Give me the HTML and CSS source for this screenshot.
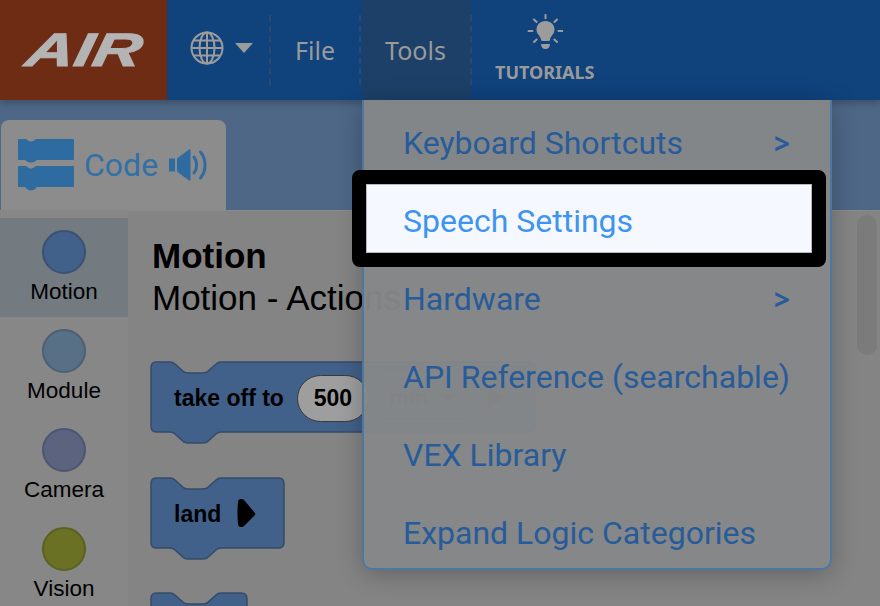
FILE: index.html
```html
<!DOCTYPE html>
<html lang="en">
<head>
<meta charset="utf-8">
<title>VEX AIR</title>
<link rel="stylesheet" href="styles.css">
</head>
<body>
<div class="app">
  <header class="topbar">
    <div class="logo"><span class="logo-text">AIR</span></div>
    <div class="lang">
      <svg class="globe" viewBox="0 0 34 34" width="34" height="34" fill="none" stroke="#9c9c9c" stroke-width="2">
        <circle cx="17" cy="17" r="15.5"/>
        <ellipse cx="17" cy="17" rx="7.5" ry="15.5"/>
        <path d="M17 1.5v31M1.5 17h31M3.6 9.5h26.8M3.6 24.5h26.8"/>
      </svg>
      <span class="caret"></span>
    </div>
    <div class="nav-item">File</div>
    <div class="nav-item nav-active">Tools</div>
    <div class="tutorials">
      <svg viewBox="0 0 36 36" width="36" height="36" fill="#9c9c9c" stroke="none">
        <path d="M18.500 7c-5.300 0-9 3.700-9 8.600 0 3 1.500 4.700 2.800 6.300.9 1.100 1.500 2.300 1.700 3.900 0 .7.500 1.200 1.200 1.200h6.600c.7 0 1.200-.5 1.200-1.200.2-1.600.8-2.800 1.700-3.900 1.300-1.600 2.800-3.300 2.800-6.300 0-4.900-3.700-8.600-9-8.600z"/>
        <path d="M14 30h9c0 3-1.800 5-4.500 5S14 33 14 30z"/>
        <path d="M18.500 .8v3.400M7 5.500l2.600 2.500M30 5.500l-2.600 2.500M1.500 17h4M31.500 17h4M7 28l2.600-2.500M30 28l-2.600-2.500" stroke="#9c9c9c" stroke-width="2" stroke-linecap="round"/>
      </svg>
      <span class="tutorials-label">TUTORIALS</span>
    </div>
  </header>

  <div class="tabbar">
    <div class="tab">
      <svg class="code-icon" viewBox="0 0 56 52" width="56" height="52" fill="#2e6ba1">
        <path d="M1 0h6.500c1.500 0 2.500 2.500 5.500 2.500s4-2.500 5.500-2.500H55a1 1 0 0 1 1 1v19a1 1 0 0 1-1 1H19.500c-1.500 0-2.500 2.500-6.500 2.500S8 21 6.500 21H1a1 1 0 0 1-1-1V1a1 1 0 0 1 1-1z"/>
        <path d="M1 27h6.500c1.500 0 2.500 2.500 5.500 2.500s4-2.500 5.500-2.500H55a1 1 0 0 1 1 1v19a1 1 0 0 1-1 1H19.500c-1.500 0-2.500 3.500-6.500 3.500S8 48 6.500 48H1a1 1 0 0 1-1-1V28a1 1 0 0 1 1-1z"/>
      </svg>
      <span class="tab-label">Code</span>
      <svg class="speaker" viewBox="0 0 38 32" width="38" height="32" fill="#2e6ba1">
        <path d="M0 9.500h6v13H0z"/>
        <path d="M8 9.500 20 .5c.8-.5 1.500 0 1.500 1v29c0 1-.7 1.500-1.500 1L8 22.500z"/>
        <path d="M25 8c3.500 4.500 3.500 11.500 0 16M31.500 3c6 7 6 19 0 26" fill="none" stroke="#2e6ba1" stroke-width="3" stroke-linecap="round"/>
      </svg>
    </div>
  </div>

  <main class="workspace">
    <nav class="categories">
      <div class="category category-active"><span class="dot dot-motion"></span><span class="category-label">Motion</span></div>
      <div class="category"><span class="dot dot-module"></span><span class="category-label">Module</span></div>
      <div class="category"><span class="dot dot-camera"></span><span class="category-label">Camera</span></div>
      <div class="category"><span class="dot dot-vision"></span><span class="category-label">Vision</span></div>
    </nav>
    <section class="palette">
      <h2 class="palette-title">Motion</h2>
      <p class="palette-sub">Motion - Actions</p>
      <div class="block block-takeoff">
        <svg class="block-shape" viewBox="0 0 386 84" width="386" height="84">
          <path d="M6 1H20q3 0 5 2l9 8q2 1 5 1H52q3 0 5-1l9-8q2-2 5-2H379q6 0 6 6V65q0 6-6 6H71q-3 0-5 2l-9 8q-2 1-5 1H39q-3 0-5-1l-9-8q-2-2-5-2H6q-5 0-5-6V7q0-6 5-6z" fill="#41608a" stroke="#364b68" stroke-width="1.500"/>
        </svg>
        <span class="block-text">take off to</span>
        <span class="pill">500</span>
        <span class="ghost-select"><span class="ghost-text">mm</span><span class="ghost-caret"></span></span>
        <span class="ghost-play"></span>
      </div>
      <div class="block block-land">
        <svg class="block-shape" viewBox="0 0 136 84" width="136" height="84">
          <path d="M6 1H20q3 0 5 2l9 8q2 1 5 1H52q3 0 5-1l9-8q2-2 5-2H129q5 0 5 6V65q0 6-5 6H71q-3 0-5 2l-9 8q-2 1-5 1H39q-3 0-5-1l-9-8q-2-2-5-2H6q-5 0-5-6V7q0-6 5-6z" fill="#41608a" stroke="#364b68" stroke-width="1.500"/>
        </svg>
        <span class="block-text">land</span>
        <svg class="play" viewBox="0 0 20 30" width="20" height="30"><path d="M4 1c-1.500 0-3 1-3 3-.7 7-.7 15 0 22 0 2 1.500 3 3 3 1.500 0 2.500-.5 3.500-1.500l10-10c1-1 1-2 0-3l-10-12C6.500 1.500 5.500 1 4 1z" fill="#000"/></svg>
      </div>
      <div class="block block-third">
        <svg class="block-shape" viewBox="0 0 98 84" width="98" height="84">
          <path d="M6 1H20q3 0 5 2l9 8q2 1 5 1H52q3 0 5-1l9-8q2-2 5-2H91q6 0 6 6V83H1V7q0-6 5-6z" fill="#41608a" stroke="#364b68" stroke-width="1.500"/>
        </svg>
      </div>
      <div class="scroll-thumb"></div>
    </section>
  </main>

  <div class="menu">
    <div class="menu-item"><span>Keyboard Shortcuts</span><span class="chev">&gt;</span></div>
    <div class="menu-item menu-item-focus"><span>Speech Settings</span></div>
    <div class="menu-item"><span>Hardware</span><span class="chev">&gt;</span></div>
    <div class="menu-item"><span>API Reference (searchable)</span></div>
    <div class="menu-item"><span>VEX Library</span></div>
    <div class="menu-item"><span>Expand Logic Categories</span></div>
  </div>
</div>
</body>
</html>
```
FILE: styles.css
```css
* { box-sizing: border-box; }
html, body { margin: 0; height: 100%; overflow: hidden; }
body { background: #848484; font-family: "Liberation Sans", Arial, sans-serif; }
.app { position: relative; width: 880px; height: 606px; overflow: hidden; display: flex; flex-direction: column; }

.topbar { position: relative; z-index: 2; flex: none; height: 100px; display: flex; background: #10427c; box-shadow: 0 2px 8px rgba(0,0,0,.3); }
.logo { width: 167px; background: #6f2c14; display: flex; align-items: center; justify-content: center; }
.logo-text { display: block; font: italic 700 47px/1 "Liberation Sans", sans-serif; color: #b4b4b4; -webkit-text-stroke: 1px #b4b4b4; transform: translate(1px,-1px) scaleX(1.42) skewX(-8deg); }
.lang { width: 103px; display: flex; align-items: center; gap: 11px; padding: 0 0 4px 23px; position: relative; }
.globe { flex: none; }
.caret { width: 0; height: 0; border-left: 9px solid transparent; border-right: 9px solid transparent; border-top: 10px solid #9c9c9c; }
.nav-item { display: flex; align-items: center; justify-content: center; font: 25px/1 "Noto Sans", sans-serif; color: #9a9a9a; width: 90px; }
.lang + .nav-item { position: relative; }
.lang::after, .nav-active::before, .nav-active::after { content: ""; position: absolute; top: 15px; bottom: 15px; border-left: 2px dashed #2a4a72; }
.lang::after { right: -1px; }
.nav-active { position: relative; width: 109px; background: #1c4068; margin-left: 2px; padding-right: 2px; }
.nav-active::before { left: -3px; }
.nav-active::after { right: -1px; }
.tutorials { margin-left: 24px; display: flex; flex-direction: column; align-items: center; padding-top: 14px; gap: 13px; }
.tutorials-label { font: 700 18px/1 "Noto Sans", sans-serif; color: #9a9a9a; }

.tabbar { flex: none; height: 110px; background: #4e6787; padding: 20px 0 0 1px; display: flex; align-items: flex-end; }
.tab { width: 225px; height: 90px; background: #8c8c8c; border-radius: 8px 8px 0 0; display: flex; align-items: center; padding: 0 0 0 17px; }
.code-icon { flex: none; }
.tab-label { margin-left: 10px; font: 32px/1 Roboto, sans-serif; color: #3270a6; }
.speaker { margin-left: 11px; }

.workspace { flex: 1; display: flex; min-height: 0; }
.categories { flex: none; width: 128px; padding-top: 8px; background: #878787; }
.category { height: 99px; display: flex; flex-direction: column; align-items: center; padding-top: 12px; }
.category-active { background: #737a80; }
.dot { width: 44px; height: 44px; border-radius: 50%; border: 2px solid; }
.dot-motion { background: #41608a; border-color: #3a5272; }
.dot-module { background: #587085; border-color: #4b5e74; }
.dot-camera { background: #5b637e; border-color: #4d5670; }
.dot-vision { background: #6a7024; border-color: #5b6120; }
.category-label { margin-top: 5px; font: 22.5px/26px "Liberation Sans", sans-serif; color: #000; }

.palette { position: relative; flex: 1; padding: 26px 0 0 24px; background: #848484; border-top: 1px solid #8a8a8a; }
.palette-title { margin: 0; font: 700 35px/38px "Liberation Sans", sans-serif; color: #000; }
.palette-sub { margin: 4px 0 0; font: 35px/38px "Liberation Sans", sans-serif; color: #000; white-space: nowrap; }
.block { position: relative; display: flex; align-items: center; height: 72px; }
.block-shape { position: absolute; left: -2px; top: 0; }
.block-takeoff { margin-top: 44px; width: 386px; }
.block-land { margin-top: 44px; width: 136px; }
.block-third { margin-top: 43px; width: 98px; }
.block-text { position: relative; margin-left: 22px; margin-top: 2px; font: 700 23px/1 "Liberation Sans", sans-serif; color: #000; }
.pill { position: relative; flex: none; margin-left: 13px; margin-top: 2px; width: 72px; height: 47px; border-radius: 24px; border: 1px solid #3a3a3a; background: #9e9e9e; display: flex; align-items: center; justify-content: center; font: 700 23px/1 "Liberation Sans", sans-serif; color: #000; }
.ghost-select { position: relative; flex: none; margin: 2px 0 0 9px; width: 92px; height: 48px; border-radius: 6px; background: #41608a; border: 1px solid #777; display: flex; align-items: center; gap: 14px; padding-left: 10px; }
.ghost-text { font: 700 22px/1 "Liberation Sans", sans-serif; color: #222; }
.ghost-caret { border-left: 6px solid transparent; border-right: 6px solid transparent; border-top: 8px solid #222; }
.ghost-play { position: relative; flex: none; margin-left: 18px; width: 17px; height: 22px; background: #222; clip-path: polygon(0 0, 100% 50%, 0 100%); }
.play { position: relative; margin-left: 16px; margin-top: -1px; }
.scroll-thumb { position: absolute; right: 3px; top: 4px; width: 20px; height: 140px; border-radius: 10px; background: #7b7b7b; }

.menu { position: absolute; z-index: 3; left: 362px; top: 100px; width: 470px; background: rgba(133,135,136,.96); border: 2px solid #4c77a3; border-top: 0; border-radius: 0 0 10px 10px; box-shadow: 0 4px 24px rgba(0,0,0,.25); }
.menu-item { position: relative; isolation: isolate; height: 78px; padding: 8px 40px 0 39px; display: flex; align-items: center; justify-content: space-between; font: 32px/1 Roboto, sans-serif; color: #285b99; }
.chev { font: 700 28px/1 "Noto Sans", sans-serif; color: #285b99; }
.menu-item-focus { color: #3f94f0; }
.menu-item-focus::before { content: ""; position: absolute; z-index: -1; left: -12px; right: 4px; top: -8px; bottom: -11px; background: #f5f9ff; border: 14px solid #000; border-radius: 8px; box-shadow: inset 0 0 0 1px #b5bac0; }
```
